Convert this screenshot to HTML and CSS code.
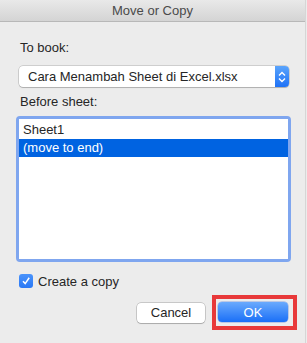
FILE: index.html
```html
<!DOCTYPE html>
<html lang="en">
<head>
  <meta charset="UTF-8" />
  <title>Move or Copy</title>
  <link rel="stylesheet" href="styles.css">
</head>
<body>
  <div class="window">
    <div class="titlebar">Move or Copy</div>

    <div class="content">
      <div class="label first">To book:</div>
      <div class="popup">
        <span class="popup-text">Cara Menambah Sheet di Excel.xlsx</span>
        <span class="stepper">
          <svg width="8" height="12" viewBox="0 0 8 12">
            <path d="M1 4.5 L4 1.5 L7 4.5 M1 7.5 L4 10.5 L7 7.5" fill="none" stroke="#fff" stroke-width="1.4"/>
          </svg>
        </span>
      </div>

      <div class="label">Before sheet:</div>
      <div class="list">
        <div class="list-inner">
          <div class="row">Sheet1</div>
          <div class="row selected">(move to end)</div>
        </div>
      </div>

      <label class="check-row">
        <span class="checkbox">
          <svg width="10" height="10" viewBox="0 0 10 10">
            <path d="M2 5.2 L4.2 7.6 L8.2 1.8" fill="none" stroke="#fff" stroke-width="1.5"/>
          </svg>
        </span>
        Create a copy
      </label>

      <div class="buttons">
        <button class="btn">Cancel</button>
        <span class="highlight">
          <button class="btn primary">OK</button>
        </span>
      </div>
    </div>
  </div>
</body>
</html>
```

FILE: styles.css
```css
* { box-sizing: border-box; margin: 0; padding: 0; }

body {
  background: #ececec;
  font-family: 'Liberation Sans', Arial, sans-serif;
  font-size: 13px;
  color: #262626;
}

.window {
  width: 306px;
  height: 343px;
  border-right: 1px solid #d6d6d6;
}

/* Title bar */
.titlebar {
  height: 22px;
  line-height: 21px;
  text-align: center;
  color: #4a4a4a;
  background: linear-gradient(#e9e9e9, #d4d4d4);
  border-bottom: 1px solid #b8b8b8;
}

.content {
  padding: 0 0 0 16px;
}

.label {
  line-height: 16px;
  padding-left: 4px;
  margin-top: 7px;
}
.label.first { margin-top: 18px; }

/* Popup button */
.popup {
  display: flex;
  align-items: stretch;
  margin: 10px 0 0 3px;
  width: 270px;
  height: 21px;
  background: #fff;
  border-radius: 4px;
  box-shadow: 0 0 0 0.5px rgba(0,0,0,0.25), 0 1px 1px rgba(0,0,0,0.15);
}
.popup-text {
  flex: 1;
  line-height: 21px;
  padding-left: 9px;
}
.stepper {
  width: 14px;
  display: flex;
  align-items: center;
  justify-content: center;
  background: linear-gradient(#5aa4fc, #1f72f6);
  border-radius: 0 4px 4px 0;
}

/* Sheet list */
.list {
  margin-top: 6px;
  width: 275px;
  height: 146px;
  border: 3px solid #7fa6ef;
  border-radius: 4px;
}
.list-inner {
  height: 100%;
  background: #fff;
  padding-top: 2px;
}
.row {
  height: 18px;
  line-height: 18px;
  padding-left: 4px;
}
.row.selected {
  background: #0063e1;
  color: #fff;
}

/* Checkbox */
.check-row {
  display: flex;
  align-items: center;
  gap: 5px;
  margin: 12px 0 0 3px;
  height: 14px;
}
.checkbox {
  width: 14px;
  height: 14px;
  border-radius: 3px;
  background: linear-gradient(#4a93fb, #2a78f5);
  display: flex;
  align-items: center;
  justify-content: center;
}

/* Buttons */
.buttons {
  display: flex;
  justify-content: flex-end;
  align-items: center;
  gap: 7px;
  margin: 7px 8px 0 0;
}
.btn {
  font-family: inherit;
  font-size: 13px;
  height: 20px;
  border: none;
  border-radius: 4px;
  background: #fff;
  color: #262626;
  width: 68px;
  box-shadow: 0 0 0 0.5px rgba(0,0,0,0.3), 0 1px 1px rgba(0,0,0,0.15);
}
.btn.primary {
  width: 70px;
  color: #fff;
  background: linear-gradient(#6aaafd, #1a6ff7);
  box-shadow: 0 0 0 0.5px rgba(0,60,200,0.4);
}
.highlight {
  display: flex;
  border: 4px solid #e8393a;
  padding: 3px 5px 4px 2px;
}
```
